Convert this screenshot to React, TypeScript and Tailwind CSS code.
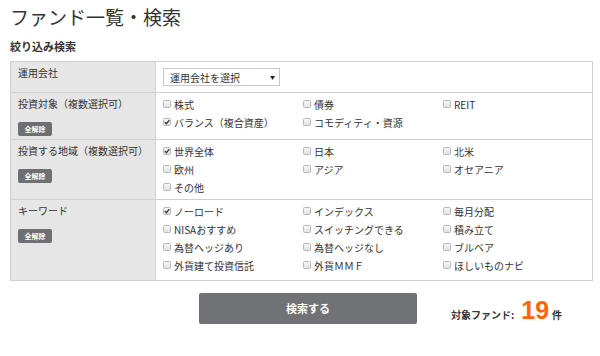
import React from 'react';

type Item = { label: string; checked?: boolean };

const targets: Item[] = [
    { label: '株式' }, { label: '債券' }, { label: 'REIT' },
    { label: 'バランス（複合資産）', checked: true }, { label: 'コモディティ・資源' },
];

const regions: Item[] = [
    { label: '世界全体', checked: true }, { label: '日本' }, { label: '北米' },
    { label: '欧州' }, { label: 'アジア' }, { label: 'オセアニア' },
    { label: 'その他' },
];

const keywords: Item[] = [
    { label: 'ノーロード', checked: true }, { label: 'インデックス' }, { label: '毎月分配' },
    { label: 'NISAおすすめ' }, { label: 'スイッチングできる' }, { label: '積み立て' },
    { label: '為替ヘッジあり' }, { label: '為替ヘッジなし' }, { label: 'ブルベア' },
    { label: '外貨建て投資信託' }, { label: '外貨ＭＭＦ' }, { label: 'ほしいものナビ' },
];

const Box: React.FC<{ checked?: boolean }> = ({ checked }) => (
    <svg width="8" height="8" viewBox="0 0 8 8" className="shrink-0">
        <defs>
            <linearGradient id="cb" x1="0" y1="0" x2="0" y2="1">
                <stop offset="0" stopColor="#f8f8f8" />
                <stop offset="1" stopColor="#e0e0e0" />
            </linearGradient>
        </defs>
        <rect x="0.5" y="0.5" width="7" height="7" rx="1" fill="url(#cb)" stroke="#b8b8b8" />
        {checked && <path d="M1.8 4.1 L3.4 5.7 L6.3 2.1" fill="none" stroke="#333" strokeWidth="1.3" />}
    </svg>
);

const CheckGrid: React.FC<{ items: Item[] }> = ({ items }) => (
    <div className="grid grid-cols-[140px_140px_140px]">
        {items.map((it, i) => (
            <label key={i} className="flex items-center gap-[3px] h-[18px] text-[10px] text-[#333]">
                <Box checked={it.checked} />
                <span>{it.label}</span>
            </label>
        ))}
    </div>
);

const ClearButton: React.FC = () => (
    <button className="mt-[3px] w-[34px] h-[14px] rounded-[2px] bg-[#6d6f73] text-white text-[7px] font-bold leading-[14px] text-center">
        全解除
    </button>
);

const Row: React.FC<{ title: string; h: string; clear?: boolean; last?: boolean; children: React.ReactNode }> = ({ title, h, clear, last, children }) => (
    <div className={`flex ${h} ${last ? '' : 'border-b border-[#d0d0d0]'}`}>
        <div className="w-[145px] shrink-0 bg-[#e6e6e6] border-r border-[#d0d0d0] pl-[7px] pt-[2px]">
            <div className="text-[10px] leading-[18px] text-[#333]">{title}</div>
            {clear && <ClearButton />}
        </div>
        <div className="flex-1 pl-[7px] pt-[2px]">{children}</div>
    </div>
);

const App: React.FC = () => {
    return (
        <div className="w-[600px] h-[356px] bg-white text-[#333] font-['Noto_Sans_CJK_JP',sans-serif]">
            <h1 className="pl-[10px] pt-[5px] text-[19px] leading-[24px] font-normal">ファンド一覧・検索</h1>
            <h2 className="pl-[10px] mt-[9px] text-[11px] leading-[16px] font-bold">絞り込み検索</h2>

            <div className="ml-[10px] mt-[7px] w-[583px] border border-[#d0d0d0]">
                <div className="flex h-[31px] border-b border-[#d0d0d0]">
                    <div className="w-[145px] shrink-0 bg-[#e6e6e6] border-r border-[#d0d0d0] pl-[7px] pt-[2px]">
                        <div className="text-[10px] leading-[18px]">運用会社</div>
                    </div>
                    <div className="flex-1 pl-[7px] pt-[6px]">
                        <div className="w-[117px] h-[18px] border border-[#c8c8c8] bg-white flex items-center justify-between pl-[6px] pr-[4px] text-[10px]">
                            <span>運用会社を選択</span>
                            <span className="text-[5px] text-[#222]">▼</span>
                        </div>
                    </div>
                </div>
                <Row title="投資対象（複数選択可）" h="h-[47px]" clear>
                    <CheckGrid items={targets} />
                </Row>
                <Row title="投資する地域（複数選択可）" h="h-[60px]" clear>
                    <CheckGrid items={regions} />
                </Row>
                <Row title="キーワード" h="h-[80px]" clear last>
                    <CheckGrid items={keywords} />
                </Row>
            </div>

            <div className="flex items-start mt-[12px] pl-[199px]">
                <button className="w-[218px] h-[31px] rounded-[2px] bg-[#707276] text-white text-[11px] font-bold">
                    検索する
                </button>
                <div className="ml-[34px] mt-[5px] flex items-baseline font-bold">
                    <span className="text-[10px]">対象ファンド:</span>
                    <span className="ml-[7px] text-[25px] leading-none text-[#ff6600] font-['Liberation_Sans',sans-serif]">19</span>
                    <span className="ml-[3px] text-[10px]">件</span>
                </div>
            </div>
        </div>
    );
};

export default App;
